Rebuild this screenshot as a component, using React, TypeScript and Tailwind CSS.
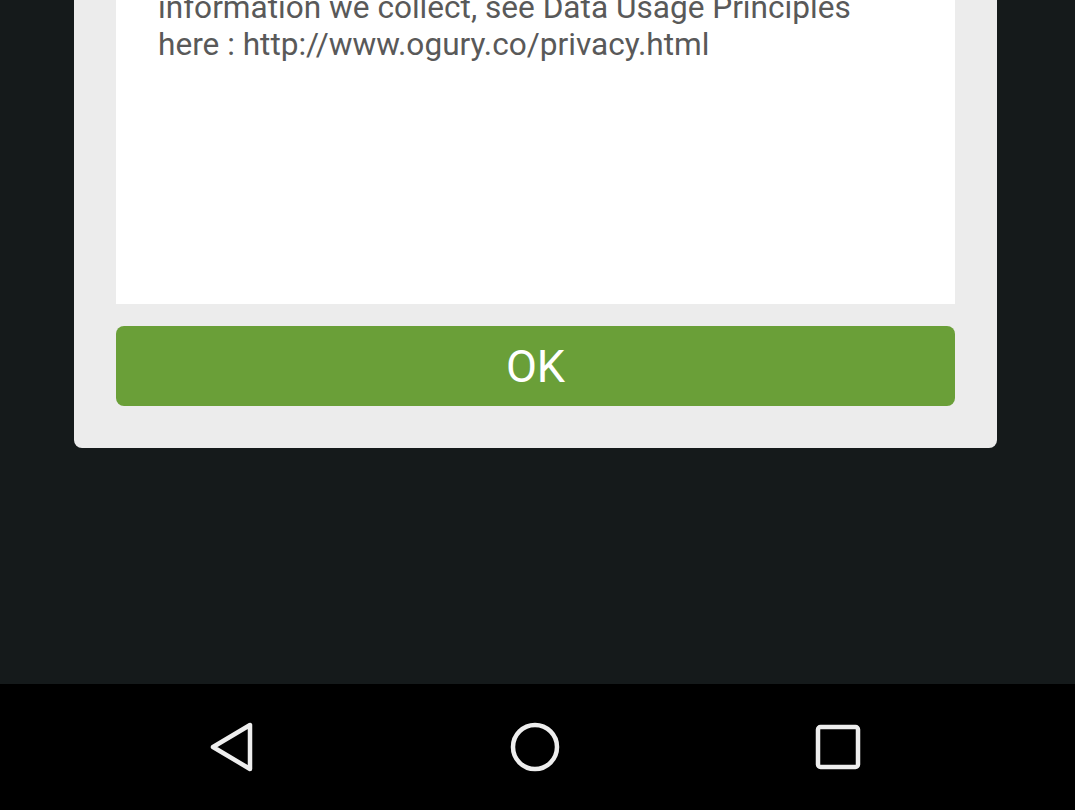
import React from "react";

export default function App() {
  return (
    <div
      className="w-[1075px] h-[810px] flex flex-col overflow-hidden bg-[#151a1b]"
      style={{ fontFamily: "Roboto, 'Noto Sans', sans-serif" }}
    >
      <div className="h-[684px] flex flex-col">
        <div className="ml-[74px] w-[923px] h-[448px] bg-[#ececec] rounded-b-[8px] px-[42px] pb-[42px] flex flex-col">
          <div className="h-[304px] bg-white overflow-hidden px-[42px]">
            <p className="mt-[-11px] text-[31.6px] leading-[37px] text-[#595959] whitespace-nowrap">
              information we collect, see Data Usage Principles
              <br />
              here : http://www.ogury.co/privacy.html
            </p>
          </div>
          <div className="mt-[22px] h-[80px] rounded-[8px] bg-[#6a9f38] flex items-center justify-center">
            <span className="text-[45px] leading-none text-white">OK</span>
          </div>
        </div>
      </div>
      <div className="flex-1 bg-black flex items-center">
        <div className="w-full flex items-center justify-between pl-[208px] pr-[212px]">
          <svg width="48" height="52" viewBox="0 0 48 52">
            <path
              d="M42 4 L42 48 L5 26 Z"
              fill="none"
              stroke="#eeeeee"
              strokeWidth="4.5"
              strokeLinejoin="round"
            />
          </svg>
          <svg width="52" height="52" viewBox="0 0 52 52">
            <circle cx="26" cy="26" r="22" fill="none" stroke="#eeeeee" strokeWidth="4.5" />
          </svg>
          <svg width="50" height="50" viewBox="0 0 50 50">
            <rect x="5" y="5" width="40" height="40" rx="2.5" fill="none" stroke="#eeeeee" strokeWidth="4.5" />
          </svg>
        </div>
      </div>
    </div>
  );
}
